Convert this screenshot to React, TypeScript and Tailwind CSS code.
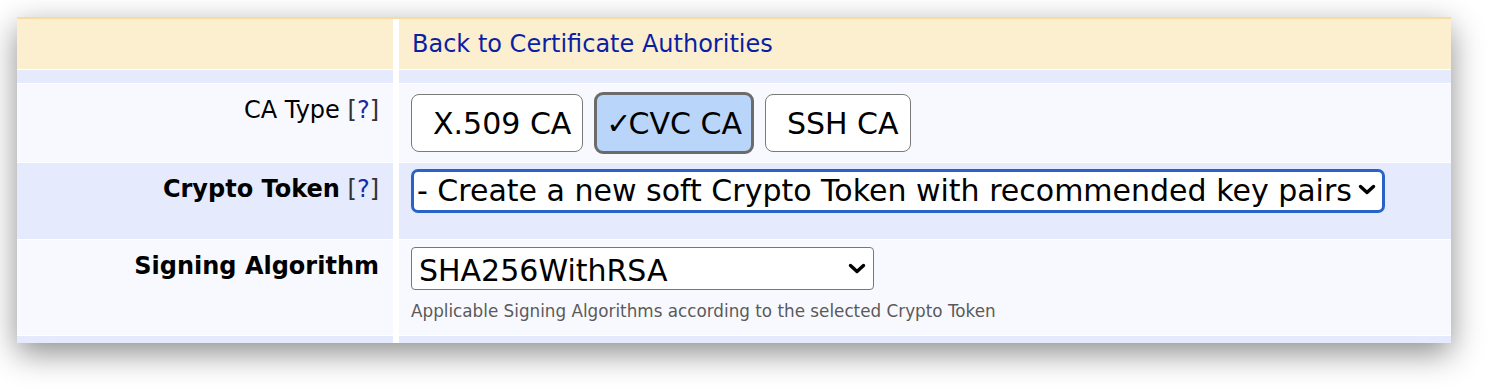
import React from 'react';

const font = { fontFamily: '"DejaVu Sans", Verdana, sans-serif' };

const Help: React.FC = () => (
  <span className="font-normal text-[#333]">
    {' '}[<span className="text-[#1a2aa8]">?</span>]
  </span>
);

const Label: React.FC<{ bold?: boolean; help?: boolean; children: React.ReactNode }> = ({ bold, help, children }) => (
  <div className={`pt-[12px] pr-[14px] text-right text-[24px] leading-[29px] text-black ${bold ? 'font-bold' : ''}`}>
    {children}
    {help && <Help />}
  </div>
);

const Chevron: React.FC<{ className: string }> = ({ className }) => (
  <svg width="18" height="11" viewBox="0 0 18 11" className={`pointer-events-none absolute ${className}`}>
    <polyline points="2.5,2.5 9,8.5 15.5,2.5" fill="none" stroke="#000" strokeWidth="3.4" strokeLinecap="round" strokeLinejoin="round" />
  </svg>
);

const TypeButton: React.FC<{ selected?: boolean; label: string }> = ({ selected, label }) =>
  selected ? (
    <button className="h-[62px] rounded-[9px] border-[3px] border-[#6b6b6b] bg-[#b9d5fa] pl-[9px] pr-[9px] text-[30px] text-black">
      <span className="tracking-[-3px]">✓</span>
      {label}
    </button>
  ) : (
    <button className="h-[58px] rounded-[8px] border border-[#7a7a7a] bg-white pl-[21px] pr-[11px] text-[30px] text-black">
      {label}
    </button>
  );

export default function App() {
  return (
    <div className="h-[391px] w-full bg-white pl-[17px] pt-[17px]" style={font}>
      <div className="w-[1434px] border-t-2 border-[#f6dca3] bg-white shadow-[0_10px_30px_rgba(0,0,0,0.45)]">
        <div className="grid grid-cols-[376px_1fr] gap-x-[6px] gap-y-px">
          {/* header */}
          <div className="h-[50px] bg-[#fcefd0]" />
          <div className="flex h-[50px] items-center bg-[#fcefd0] pl-[13px] text-[24px] text-[#0a1fa3]">
            <a href="#">Back to Certificate Authorities</a>
          </div>

          <div className="h-[13px] bg-[#e5eafc]" />
          <div className="h-[13px] bg-[#e5eafc]" />

          {/* CA type */}
          <div className="h-[78px] bg-[#f8f9fe]">
            <Label help>CA Type</Label>
          </div>
          <div className="flex h-[78px] items-start bg-[#f8f9fe] pl-[12px] pt-[8px]">
            <div className="flex items-center gap-[11px]">
              <TypeButton label="X.509 CA" />
              <TypeButton selected label="CVC CA" />
              <TypeButton label="SSH CA" />
            </div>
          </div>

          {/* crypto token */}
          <div className="h-[76px] bg-[#e5eafc]">
            <Label bold help>Crypto Token</Label>
          </div>
          <div className="h-[76px] bg-[#e5eafc] pl-[12px] pt-[6px]">
            <div className="relative w-[974px]">
              <select
                className="h-[44px] w-full appearance-none rounded-[7px] border-[3px] border-[#2962c8] bg-white pl-[3px] text-[30px] leading-[34px] text-black outline-none"
                style={font}
                defaultValue="new"
              >
                <option value="new">- Create a new soft Crypto Token with recommended key pairs</option>
              </select>
              <Chevron className="right-[9px] top-[15px]" />
            </div>
          </div>

          {/* signing algorithm */}
          <div className="h-[95px] bg-[#f8f9fe]">
            <Label bold>Signing Algorithm</Label>
          </div>
          <div className="h-[95px] bg-[#f8f9fe] pl-[12px] pt-[7px]">
            <div className="relative w-[463px]">
              <select
                className="h-[43px] w-full appearance-none rounded-[4px] border border-[#777] bg-white pl-[7px] text-[30px] text-black outline-none"
                style={font}
                defaultValue="sha256"
              >
                <option value="sha256">SHA256WithRSA</option>
              </select>
              <Chevron className="right-[8px] top-[16px]" />
            </div>
            <p className="mt-[11px] text-[16.8px] leading-[20px] text-[#5a5a5a]">
              Applicable Signing Algorithms according to the selected Crypto Token
            </p>
          </div>

          <div className="h-[7px] bg-[#e5eafc]" />
          <div className="h-[7px] bg-[#e5eafc]" />
        </div>
      </div>
    </div>
  );
}
